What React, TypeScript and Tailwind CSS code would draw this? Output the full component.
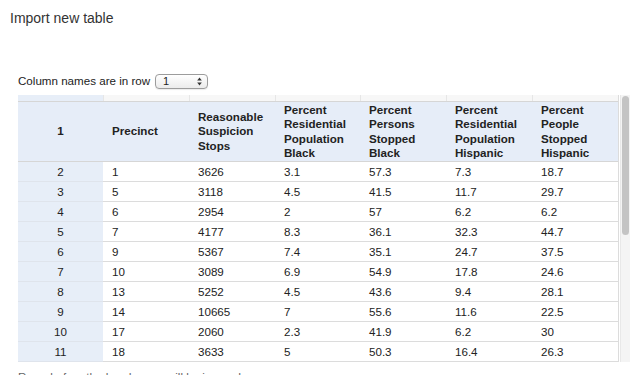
import React from "react";

const headers = [
  "1",
  "Precinct",
  "Reasonable Suspicion Stops",
  "Percent Residential Population Black",
  "Percent Persons Stopped Black",
  "Percent Residential Population Hispanic",
  "Percent People Stopped Hispanic",
];

const rows: string[][] = [
  ["2", "1", "3626", "3.1", "57.3", "7.3", "18.7"],
  ["3", "5", "3118", "4.5", "41.5", "11.7", "29.7"],
  ["4", "6", "2954", "2", "57", "6.2", "6.2"],
  ["5", "7", "4177", "8.3", "36.1", "32.3", "44.7"],
  ["6", "9", "5367", "7.4", "35.1", "24.7", "37.5"],
  ["7", "10", "3089", "6.9", "54.9", "17.8", "24.6"],
  ["8", "13", "5252", "4.5", "43.6", "9.4", "28.1"],
  ["9", "14", "10665", "7", "55.6", "11.6", "22.5"],
  ["10", "17", "2060", "2.3", "41.9", "6.2", "30"],
  ["11", "18", "3633", "5", "50.3", "16.4", "26.3"],
];

const cols = "grid grid-cols-[85px_86px_86px_85px_86px_86px_86px]";

export default function App() {
  return (
    <div className="w-[640px] h-[375px] overflow-hidden bg-white text-[#222] font-['Liberation_Sans',Arial,sans-serif]">
      <div className="pl-[10px] pt-[10px] text-[14px] leading-[16px] text-[#333]">Import new table</div>

      <div className="mt-[47px] ml-[18px] flex items-center h-[16px] text-[11.6px] leading-[16px]">
        <span>Column names are in row</span>
        <div className="ml-[5px] w-[53px] h-[15px] rounded-[4px] border border-[#9c9c9c] bg-gradient-to-b from-white to-[#ebebeb] flex items-center justify-between pl-[7px] pr-[5px] shadow-[0_1px_1px_rgba(0,0,0,0.08)]">
          <span className="text-[11px] leading-[13px]">1</span>
          <svg width="5" height="9" viewBox="0 0 5 9">
            <path d="M2.5 0.5 L4.8 3.5 L0.2 3.5 Z" fill="#333" />
            <path d="M2.5 8.5 L4.8 5.5 L0.2 5.5 Z" fill="#333" />
          </svg>
        </div>
      </div>

      <div className="mt-[6px] ml-[18px] flex">
        <div className="w-[601px] h-[267px] overflow-hidden border-r border-[#dcdcdc] text-[11.6px]">
          <div className={`${cols} h-[7px] border-b border-[#d6d6d6]`}>
            {headers.map((_, i) => (
              <div
                key={i}
                className={i === 0 ? "bg-[#e7eef8]" : "bg-[#f7f7f7] border-l border-[#e6e6e6]"}
              />
            ))}
          </div>
          <div className={`${cols} h-[60px] border-b border-[#d6d6d6] bg-[#e6edf8] font-bold leading-[14.5px]`}>
            {headers.map((h, i) => (
              <div
                key={i}
                className={
                  i === 0
                    ? "flex items-center justify-center"
                    : "flex items-center pl-[9px] pr-[4px]"
                }
              >
                <span>{h}</span>
              </div>
            ))}
          </div>
          {rows.map((r, ri) => (
            <div key={ri} className={`${cols} h-[20px] leading-[19px]`}>
              {r.map((c, ci) => (
                <div
                  key={ci}
                  className={
                    ci === 0
                      ? "bg-[#e7eef8] text-center border-b border-[#dfe4ec]"
                      : "bg-white pl-[9px] border-b border-[#dcdcdc]"
                  }
                >
                  {c}
                </div>
              ))}
            </div>
          ))}
        </div>
        <div className="ml-[1px] w-[10px] h-[267px] bg-[#f4f4f4] border-l border-[#e8e8e8] pt-[1px]">
          <div className="mx-auto w-[7px] h-[139px] rounded-full bg-[#c4c4c4]" />
        </div>
      </div>

      <div className="mt-[7px] ml-[18px] text-[11.6px] leading-[16px] text-[#666]">
        Rows before the header row will be ignored.
      </div>
    </div>
  );
}
